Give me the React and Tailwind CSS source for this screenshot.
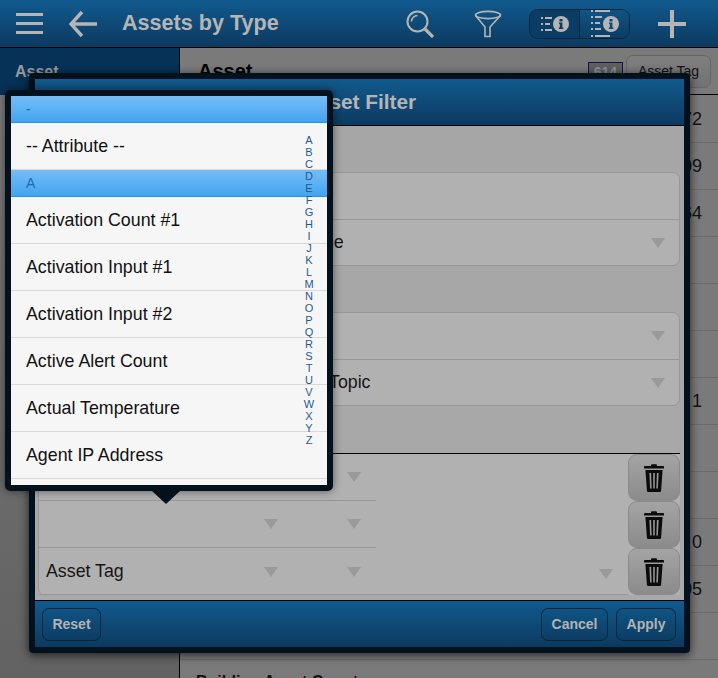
import React from 'react';

const bars = 'bg-gradient-to-b from-[#115a8e] to-[#0c3a60]';
const rowLetters = 'ABCDEFGHIJKLMNOPQRSTUVWXYZ'.split('');
const popupRows = ['Activation Count #1', 'Activation Input #1', 'Activation Input #2', 'Active Alert Count', 'Actual Temperature', 'Agent IP Address'];
const bgNumbers = ['72', '09', '64', '', '', '', '1', '', '', '0', '05', ''];

const Caret = () => (
  <svg width="14" height="10" viewBox="0 0 14 10" className="shrink-0">
    <path d="M0 0h14L7 10z" fill="#9a9a9a" />
  </svg>
);

const Trash = () => (
  <svg width="22" height="28" viewBox="0 0 22 28">
    <path d="M8 1.5c0-.8.6-1.2 1.2-1.2h3.6c.6 0 1.2.4 1.2 1.2V2h6c.6 0 1 .4 1 1v1.6H1V3c0-.6.4-1 1-1h6z" fill="#0b0b0b" />
    <path d="M2.4 6h17.2l-1.5 20.4c-.1.9-.7 1.6-1.6 1.6H5.5c-.9 0-1.5-.7-1.6-1.6zM6.4 9l.7 15.6h1.6L8.1 9zm3.8 0v15.6h1.6V9zm3.7 0-.6 15.6h1.6L15.6 9z" fill="#0b0b0b" fillRule="evenodd" />
  </svg>
);

const ListIcon = ({ tall }) => (
  <svg width="28" height={tall ? 28 : 16} viewBox={tall ? '0 0 28 28' : '0 0 28 16'}>
    {tall ? (
      <g fill="#b5b5b5">
        <path d="M0 0h2v2H0zM4 0h15v2H4zM0 6h2v2H0zM4 6h7v2H4zM0 12h2v2H0zM4 12h5v2H4zM0 18h2v2H0zM4 18h6v2H4zM0 25h2v2H0zM4 25h15v2H4z" />
        <circle cx="20" cy="14" r="8" />
        <path d="M18.5 9h3v2.4h-3zM18 12.6h3.4v5h1v1.4h-4.6v-1.4h1v-3.6h-.8z" fill="#0e4a78" />
      </g>
    ) : (
      <g fill="#b5b5b5">
        <path d="M0 1h2v2H0zM4 1h7v2H4zM0 7h2v2H0zM4 7h5v2H4zM0 13h2v2H0zM4 13h7v2H4z" />
        <circle cx="20" cy="8" r="8" />
        <path d="M18.5 3h3v2.4h-3zM18 6.6h3.4v5h1V13h-4.6v-1.4h1V8h-.8z" fill="#0a3c64" />
      </g>
    )}
  </svg>
);

const FilterRow = ({ children, carets = 1, border = true, pl = 'pl-2', height = 'h-[47px]' }) => (
  <div className={`flex items-center pr-[14px] text-[17.8px] text-[#151515] ${height} ${pl} ${border ? 'border-b border-[#979797]' : ''}`}>
    <span className="flex-1">{children}</span>
    {carets ? <Caret /> : null}
  </div>
);

const PairRow = ({ text, last }) => (
  <div className={`flex h-[47px] w-[337px] items-center pl-[7px] text-[17.8px] text-[#151515] ${last ? '' : 'border-b border-[#979797]'}`}>
    <span className="flex-1">{text}</span>
    <span className="mr-[-1px]"><Caret /></span>
    <span className="ml-[70px] mr-[15px]"><Caret /></span>
  </div>
);

const FooterButton = ({ children, className = '' }) => (
  <button className={`h-[33px] rounded-[7px] border border-[#06263f] bg-gradient-to-b from-[#0f5484] to-[#0c3d64] text-[14px] font-bold text-[#b3b3b3] ${className}`}>
    {children}
  </button>
);

export default function App() {
  return (
    <div className="relative h-[678px] w-[718px] overflow-hidden bg-[#7a7a7a] font-['Liberation_Sans',Arial,sans-serif]">
      {/* page behind the dialog */}
      <header className={`flex h-[48px] items-center border-b border-black pr-[32px] ${bars}`}>
        <div className="ml-4 flex w-[27px] flex-col gap-[6px]">
          <div className="h-[3px] bg-[#b5b5b5]" />
          <div className="h-[3px] bg-[#b5b5b5]" />
          <div className="h-[3px] bg-[#b5b5b5]" />
        </div>
        <svg width="28" height="28" viewBox="0 0 28 28" className="ml-[26px]">
          <path d="M13 2 2 14l11 12M3 14h25" fill="none" stroke="#b5b5b5" strokeWidth="3.4" />
        </svg>
        <h1 className="ml-[25px] flex-1 text-[21.6px] font-bold text-[#b5b5b5]">Assets by Type</h1>
        <svg width="28" height="28" viewBox="0 0 28 28">
          <circle cx="11.5" cy="11.5" r="10" fill="none" stroke="#b5b5b5" strokeWidth="2" />
          <path d="M5.5 11.5a6 6 0 0 1 6-6" fill="none" stroke="#b5b5b5" strokeWidth="1.6" />
          <path d="m19 19 8 8" stroke="#b5b5b5" strokeWidth="3.2" />
        </svg>
        <svg width="28" height="28" viewBox="0 0 28 28" className="ml-[40px]">
          <ellipse cx="14" cy="5" rx="12.5" ry="3.6" fill="none" stroke="#b5b5b5" strokeWidth="1.6" />
          <path d="M1.5 5.5 11 17v9.5h5V17l10.5-11.5" fill="none" stroke="#b5b5b5" strokeWidth="1.6" />
        </svg>
        <div className="ml-[27px] flex h-[30px] w-[101px] overflow-hidden rounded-[9px] border border-[#06263f]">
          <div className="flex w-[50px] items-center justify-center border-r border-[#06263f] bg-[#0a3c64]"><ListIcon /></div>
          <div className="flex flex-1 items-center justify-center bg-gradient-to-b from-[#0f5484] to-[#0c3d64]"><ListIcon tall /></div>
        </div>
        <svg width="28" height="28" viewBox="0 0 28 28" className="ml-[28px]">
          <path d="M12 0h4v12h12v4H16v12h-4V16H0v-4h12z" fill="#b5b5b5" />
        </svg>
      </header>

      <div className="flex h-[630px]">
        <aside className="w-[180px] shrink-0 border-r border-black bg-gradient-to-b from-[#7d7d7d] to-[#626262]">
          <div className="h-[47px] bg-[#063258] pl-[15px] pt-[12px] text-[16px] font-bold text-[#9a9a9a]">Asset</div>
        </aside>
        <main className="flex-1">
          <div className="flex h-[47px] items-center border-b border-black pl-[18px] pr-[7px]">
            <span className="flex-1 text-[20px] font-bold text-black">Asset</span>
            <span className="mr-[3px] mt-[2px] border border-[#101050] bg-[#5f5f5f] px-[5px] text-[14px] font-bold leading-[18px] text-[#8f8f8f]">614</span>
            <span className="flex h-[33px] w-[85px] items-center justify-center rounded-[7px] border border-[#666] bg-gradient-to-b from-[#7f7f7f] to-[#727272] text-[14px] text-[#111]">Asset Tag</span>
          </div>
          <div className="mt-px">
            {bgNumbers.map((n, i) => (
              <div key={i} className="flex h-[47px] items-center justify-end border-b border-[#6a6a6a] pr-4 text-[18px] text-[#111]">{n}</div>
            ))}
          </div>
          <div className="pl-4 pt-[10px] text-[16px] font-bold text-[#111]">Building Asset Count</div>
        </main>
      </div>

      {/* filter dialog */}
      <section className="absolute left-[29px] top-[73px] flex h-[580px] w-[661px] flex-col rounded-[4px] border-[6px] border-[#03111d] shadow-[0_2px_10px_rgba(0,0,0,0.7)]">
        <div className={`flex h-[47px] shrink-0 items-center justify-center border-b border-black text-[20.8px] font-bold text-[#b5b5b5] ${bars}`}>Asset Filter</div>
        <div className="flex-1 bg-gradient-to-b from-[#a6a6a6] to-[#a9a9a9] pl-[3px] pr-[4px]">
          <div className="mt-[46px] rounded-[7px] border border-[#979797] bg-[#b1b1b1]">
            <FilterRow carets={0} />
            <FilterRow border={false} height="h-[45px]" pl="pl-[266px]">Type</FilterRow>
          </div>
          <div className="mt-[46px] rounded-[7px] border border-[#979797] bg-[#b1b1b1]">
            <FilterRow />
            <FilterRow border={false} height="h-[45px]" pl="pl-[290px]">Topic</FilterRow>
          </div>
          <div className="mt-[47px] flex h-[142px] rounded-bl-[7px] border-l border-t border-l-[#979797] border-t-black bg-[#b1b1b1]">
            <div className="relative flex-1 border-b border-[#979797]">
              <PairRow />
              <PairRow />
              <PairRow text="Asset Tag" last />
              <span className="absolute bottom-[15px] right-[15px]"><Caret /></span>
            </div>
            <div className="flex w-[52px] flex-col">
              {[0, 1, 2].map((i) => (
                <button key={i} className="flex h-[47px] items-center justify-center rounded-[9px] border border-[#8a8a8a] bg-gradient-to-b from-[#a4a4a4] to-[#8b8b8b]">
                  <Trash />
                </button>
              ))}
            </div>
          </div>
        </div>
        <div className={`flex h-[47px] shrink-0 items-center border-t border-black pl-[7px] pr-2 ${bars}`}>
          <FooterButton className="w-[59px]">Reset</FooterButton>
          <FooterButton className="ml-auto w-[67px]">Cancel</FooterButton>
          <FooterButton className="ml-2 w-[60px]">Apply</FooterButton>
        </div>
      </section>

      {/* attribute picker */}
      <section className="absolute left-[5px] top-[90px] h-[401px] w-[328px] rounded-[5px] border-[6px] border-[#03111d] shadow-[0_0_8px_rgba(0,0,0,0.5)]">
        <div className="relative h-full overflow-hidden bg-[#f6f6f6]">
          <div className="flex h-[27px] items-center border-b border-[#2a93e0] bg-gradient-to-b from-[#75bdf6] to-[#41a4f0] pl-[15px] text-[14px] text-[#1a6cb0]">-</div>
          <div className="flex h-[47px] items-center border-b border-[#d9d9d9] pl-[15px] text-[17.8px] text-[#111]">-- Attribute --</div>
          <div className="flex h-[27px] items-center border-b border-[#2a93e0] bg-gradient-to-b from-[#75bdf6] to-[#41a4f0] pl-[15px] text-[14px] text-[#1a6cb0]">A</div>
          {popupRows.map((r) => (
            <div key={r} className="flex h-[47px] items-center border-b border-[#d9d9d9] pl-[15px] text-[17.8px] text-[#111]">{r}</div>
          ))}
          <div className="absolute right-[12px] top-[38px] flex w-[12px] flex-col items-center text-[11px] leading-[12px] text-[#1f5c92]">
            {rowLetters.map((l) => <span key={l}>{l}</span>)}
          </div>
        </div>
        <div className="absolute left-[141px] top-[395px] h-0 w-0 border-x-[14px] border-t-[13px] border-x-transparent border-t-[#03111d]" />
      </section>
    </div>
  );
}
